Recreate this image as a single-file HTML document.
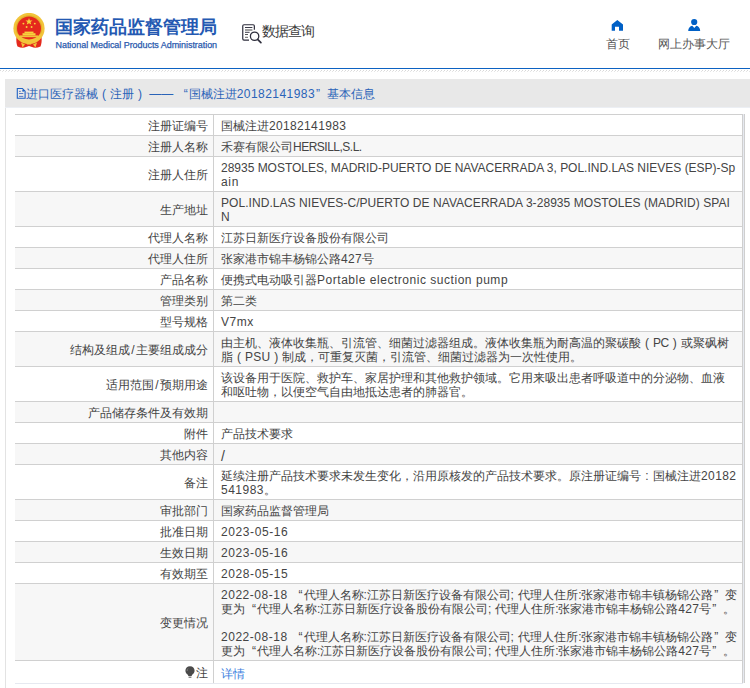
<!DOCTYPE html>
<html><head><meta charset="utf-8">
<style>
*{box-sizing:border-box}
html,body{margin:0;padding:0;width:750px;height:688px;overflow:hidden;background:#fff;font-family:"Liberation Sans",sans-serif;color:#444}
b,i{font-weight:normal;font-style:normal}
.abs{position:absolute}
.emblem{position:absolute;left:12px;top:13px}
.title{position:absolute;left:55px;top:15px;font-size:18px;line-height:24px;color:#2459b2;font-weight:bold;white-space:nowrap}
.sub{position:absolute;left:55.5px;top:39px;font-size:9px;line-height:12px;color:#2a5aae;white-space:nowrap;letter-spacing:-0.05px;-webkit-text-stroke:0.25px #2a5aae}
.query{position:absolute;left:262px;top:21px;font-size:14px;line-height:20px;color:#3a3a3a;white-space:nowrap;letter-spacing:-1px}
.nav{position:absolute;font-size:12px;line-height:16px;color:#555;white-space:nowrap}
.blue{position:absolute;left:0;top:68px;width:750px;height:1px;background:#0c62c2}
.hatch{position:absolute;left:0;top:70px;width:750px;height:2px;background-image:linear-gradient(45deg,transparent 0 40%,#dcdcdc 40% 60%,transparent 60%);background-size:3px 2px}
.box{position:absolute;left:5px;top:79px;width:760px;height:620px;border-left:1px solid #e3e3e3}
.bar{position:absolute;left:5px;top:79px;width:745px;height:28px;background:#e8e8e8}
.bartxt{position:absolute;left:26px;top:86px;font-size:12px;line-height:16px;color:#2a63b8;white-space:nowrap}
.row{position:absolute;left:15px;width:729px;border-top:1px solid #d0d0d0}
.row .lab{position:absolute;left:0;top:0;width:199px;border-right:1px solid #d0d0d0;text-align:right;padding-right:5px;font-size:12px;white-space:nowrap}
.row .val{position:absolute;left:206px;top:4px;font-size:12px;line-height:14px;white-space:nowrap}
.ln{height:14px}
.lq,.rq,.pp{display:inline-block;width:12px}
.lq{text-align:right;padding-right:1px}
.rq{text-align:left;padding-left:1px}
.pp{text-align:center}
.cl{display:inline-block;width:3px;letter-spacing:0;text-align:center}
.rb{position:absolute;left:742px;top:114px;width:3px;height:569px;border-left:1px solid #cfcfcf;border-right:1px solid #cfcfcf;background:#e6e9f0}
.bb{position:absolute;left:15px;top:683px;width:728px;height:1px;background:#e6e9f0}
a{color:#3c7fe0}
.bulb{vertical-align:-1px;margin-right:1px}
</style></head><body>
<svg class="emblem" width="34" height="36" viewBox="0 0 34 36">
<path d="M4.5 24 C4 28 4.5 31 5.5 33.5 C9 35 12 35 14 34 L17 33 L20 34 C22 35 25 35 28.5 33.5 C29.5 31 30 28 29.5 24 Z" fill="#e4291c"/>
<circle cx="17" cy="15.5" r="15.6" fill="#f2c43a"/>
<circle cx="17" cy="15.5" r="13.2" fill="#e3b02a"/>
<circle cx="17" cy="15.5" r="12" fill="#e5281d"/>
<polygon points="17,5 17.9,7.4 20.5,7.5 18.5,9.1 19.2,11.6 17,10.2 14.8,11.6 15.5,9.1 13.5,7.5 16.1,7.4" fill="#f7d43c"/>
<circle cx="11.4" cy="10.6" r="0.95" fill="#f7d43c"/><circle cx="22.8" cy="10.6" r="0.95" fill="#f7d43c"/>
<circle cx="14.6" cy="14" r="0.95" fill="#f7d43c"/><circle cx="19.6" cy="14" r="0.95" fill="#f7d43c"/>
<rect x="12.5" y="18.6" width="9" height="1.6" fill="#f7d43c"/>
<rect x="10.5" y="20.2" width="13" height="2.2" fill="#f7d43c"/>
<rect x="7.8" y="22.4" width="18.4" height="1.8" fill="#f2c43a"/>
<path d="M4.5 20 Q17 33 29.5 20 L29.5 23.5 Q17 35 4.5 23.5 Z" fill="#f2c43a"/>
<path d="M9 29.5 L10.5 34.5 L13 31.5 Z M25 29.5 L23.5 34.5 L21 31.5 Z" fill="#f2c43a"/>
<path d="M14 29 Q17 27.5 20 29 L19 31.5 H15 Z" fill="#f2c43a"/>
</svg>
<div class="title">国家药品监督管理局</div>
<div class="sub">National Medical Products Administration</div>
<svg class="abs" style="left:240px;top:22px" width="24" height="24" viewBox="0 0 24 24">
<path d="M14.35 7.8 V4 Q14.35 2.75 13.1 2.75 H4 Q2.75 2.75 2.75 4 V16.8 Q2.75 18.05 4 18.05 H9" fill="none" stroke="#2e2e3c" stroke-width="1.2"/>
<path d="M5 5.5 H12.4" stroke="#3a3a48" stroke-width="1"/>
<path d="M5 8 H12.4" stroke="#777" stroke-width="1.4"/>
<path d="M5 10.3 H9.6" stroke="#3a3a48" stroke-width="1"/>
<path d="M5 12.5 H8" stroke="#555" stroke-width="1"/>
<path d="M5 15.3 H8" stroke="#666" stroke-width="1"/>
<circle cx="14.6" cy="14.25" r="4.2" fill="none" stroke="#2e2e3c" stroke-width="1.3"/>
<path d="M17.6 17.4 L20.9 20.7" stroke="#2e2e3c" stroke-width="1.7" stroke-linecap="round"/>
</svg>
<div class="query">数据查询</div>
<svg class="abs" style="left:610px;top:18px" width="15" height="15" viewBox="0 0 15 15"><path d="M7.3 2 L13 6.5 V12.8 H9 V8.8 H5 V12.8 H1.7 V6.5 Z" fill="#0060c6"/></svg>
<div class="nav" style="left:606px;top:36px">首页</div>
<svg class="abs" style="left:687px;top:18px" width="14" height="14" viewBox="0 0 14 14"><circle cx="7.2" cy="4" r="3.1" fill="#0060c6"/><path d="M1.2 13 C1.2 10 3 8.2 5.3 7.8 L7.3 10 L9.3 7.8 C11.5 8.2 13.2 10 13.2 13 Z" fill="#0060c6"/></svg>
<div class="nav" style="left:658px;top:36px">网上办事大厅</div>
<div class="blue"></div>
<svg class="abs" style="left:0;top:70px" width="750" height="2"><defs><pattern id="hp" width="3" height="2" patternUnits="userSpaceOnUse"><rect x="0" y="0" width="1" height="1" fill="#d8d8d8"/><rect x="2" y="1" width="1" height="1" fill="#e6e6e6"/></pattern></defs><rect width="750" height="2" fill="url(#hp)"/></svg>
<div class="box"></div>
<div class="bar"></div><div class="abs" style="left:5px;top:107px;width:745px;height:1px;background:#eceff4"></div>
<svg class="abs" style="left:16px;top:87px" width="11" height="13" viewBox="0 0 11 13"><path d="M1.3 1.5 H6.4 L9.1 4.2 V11.2 H1.3 Z" fill="none" stroke="#1f62c4" stroke-width="1.1"/><rect x="6.3" y="3" width="1.9" height="1.6" fill="#1f62c4"/><path d="M3 4.4 H4.8 M3 6.5 H7.3 M3 9.4 H7.3" stroke="#4a6fc0" stroke-width="0.9"/></svg>
<div class="bartxt">进口医疗器械<i class="pp">(</i>注册<i class="pp">)</i> —— <i class="lq">“</i>国械注进<b class="L" style="letter-spacing:0.45px">20182141983</b><i class="rq">”</i>基本信息</div>
<div class="row" style="top:114px;height:21px;background:#fff"><div class="lab" style="height:20px;line-height:22px">注册证编号</div><div class="val"><div class="ln">国械注进<b class="L" style="letter-spacing:0.345px">20182141983</b></div></div></div><div class="row" style="top:135px;height:21px;background:#f7f7f7"><div class="lab" style="height:20px;line-height:22px">注册人名称</div><div class="val"><div class="ln">禾赛有限公司<b class="L" style="letter-spacing:-0.500px">HERSILL,S.L.</b></div></div></div><div class="row" style="top:156px;height:35px;background:#fff"><div class="lab" style="height:34px;line-height:36px">注册人住所</div><div class="val"><div class="ln"><b class="L" style="letter-spacing:-0.011px">28935 MOSTOLES, MADRID-PUERTO DE NAVACERRADA 3, POL.IND.LAS NIEVES (ESP)-Sp</b></div><div class="ln"><b class="L" style="letter-spacing:0.667px">ain</b></div></div></div><div class="row" style="top:191px;height:35px;background:#f7f7f7"><div class="lab" style="height:34px;line-height:36px">生产地址</div><div class="val"><div class="ln"><b class="L" style="letter-spacing:0.055px">POL.IND.LAS NIEVES-C/PUERTO DE NAVACERRADA 3-28935 MOSTOLES (MADRID) SPAI</b></div><div class="ln"><b class="L" style="letter-spacing:15.600px">N</b></div></div></div><div class="row" style="top:226px;height:21px;background:#fff"><div class="lab" style="height:20px;line-height:22px">代理人名称</div><div class="val"><div class="ln">江苏日新医疗设备股份有限公司</div></div></div><div class="row" style="top:247px;height:21px;background:#f7f7f7"><div class="lab" style="height:20px;line-height:22px">代理人住所</div><div class="val"><div class="ln">张家港市锦丰杨锦公路<b class="L" style="letter-spacing:0.333px">427</b>号</div></div></div><div class="row" style="top:268px;height:21px;background:#fff"><div class="lab" style="height:20px;line-height:22px">产品名称</div><div class="val"><div class="ln">便携式电动吸引器<b class="L" style="letter-spacing:0.531px">Portable electronic suction pump</b></div></div></div><div class="row" style="top:289px;height:21px;background:#f7f7f7"><div class="lab" style="height:20px;line-height:22px">管理类别</div><div class="val"><div class="ln">第二类</div></div></div><div class="row" style="top:310px;height:21px;background:#fff"><div class="lab" style="height:20px;line-height:22px">型号规格</div><div class="val"><div class="ln"><b class="L" style="letter-spacing:0.500px">V7mx</b></div></div></div><div class="row" style="top:331px;height:35px;background:#f7f7f7"><div class="lab" style="height:34px;line-height:36px">结构及组成<span style="margin:0 1.5px">/</span>主要组成成分</div><div class="val"><div class="ln">由主机、液体收集瓶、引流管、细菌过滤器组成。液体收集瓶为耐高温的聚碳酸<i class="pp">(</i><b class="L" style="letter-spacing:-0.500px">PC</b><i class="pp">)</i>或聚砜树</div><div class="ln">脂<i class="pp">(</i><b class="L" style="letter-spacing:0.200px">PSU</b><i class="pp">)</i>制成，可重复灭菌，引流管、细菌过滤器为一次性使用。</div></div></div><div class="row" style="top:366px;height:35px;background:#fff"><div class="lab" style="height:34px;line-height:36px">适用范围<span style="margin:0 1.5px">/</span>预期用途</div><div class="val"><div class="ln">该设备用于医院、救护车、家居护理和其他救护领域。它用来吸出患者呼吸道中的分泌物、血液</div><div class="ln">和呕吐物，以便空气自由地抵达患者的肺器官。</div></div></div><div class="row" style="top:401px;height:21px;background:#f7f7f7"><div class="lab" style="height:20px;line-height:22px">产品储存条件及有效期</div><div class="val"><div class="ln">&nbsp;</div></div></div><div class="row" style="top:422px;height:21px;background:#fff"><div class="lab" style="height:20px;line-height:22px">附件</div><div class="val"><div class="ln">产品技术要求</div></div></div><div class="row" style="top:443px;height:21px;background:#f7f7f7"><div class="lab" style="height:20px;line-height:22px">其他内容</div><div class="val"><div class="ln"><span style="font-size:14px;line-height:14px;display:inline-block;transform:translateY(1px)">/</span></div></div></div><div class="row" style="top:464px;height:35px;background:#fff"><div class="lab" style="height:34px;line-height:36px">备注</div><div class="val"><div class="ln">延续注册产品技术要求未发生变化，沿用原核发的产品技术要求。原注册证编号<i class="pp">:</i>国械注进<b class="L" style="letter-spacing:0.400px">20182</b></div><div class="ln"><b class="L" style="letter-spacing:0.500px">541983</b>。</div></div></div><div class="row" style="top:499px;height:21px;background:#f7f7f7"><div class="lab" style="height:20px;line-height:22px">审批部门</div><div class="val"><div class="ln">国家药品监督管理局</div></div></div><div class="row" style="top:520px;height:21px;background:#fff"><div class="lab" style="height:20px;line-height:22px">批准日期</div><div class="val"><div class="ln"><b class="L" style="letter-spacing:0.600px">2023-05-16</b></div></div></div><div class="row" style="top:541px;height:21px;background:#f7f7f7"><div class="lab" style="height:20px;line-height:22px">生效日期</div><div class="val"><div class="ln"><b class="L" style="letter-spacing:0.600px">2023-05-16</b></div></div></div><div class="row" style="top:562px;height:21px;background:#fff"><div class="lab" style="height:20px;line-height:22px">有效期至</div><div class="val"><div class="ln"><b class="L" style="letter-spacing:0.600px">2028-05-15</b></div></div></div><div class="row" style="top:583px;height:77px;background:#f7f7f7"><div class="lab" style="height:76px;line-height:78px">变更情况</div><div class="val"><div class="ln"><b class="L" style="letter-spacing:0.533px">2022-08-18 </b><i class="lq">“</i>代理人名称<b class="L" style="letter-spacing:0.533px"><i class="cl">:</i></b>江苏日新医疗设备有限公司<b class="L" style="letter-spacing:0.533px">; </b>代理人住所<b class="L" style="letter-spacing:0.533px"><i class="cl">:</i></b>张家港市锦丰镇杨锦公路<i class="rq">”</i>变</div><div class="ln">更为<i class="lq">“</i>代理人名称<b class="L" style="letter-spacing:0.286px"><i class="cl">:</i></b>江苏日新医疗设备股份有限公司<b class="L" style="letter-spacing:0.286px">; </b>代理人住所<b class="L" style="letter-spacing:0.286px"><i class="cl">:</i></b>张家港市锦丰杨锦公路<b class="L" style="letter-spacing:0.286px">427</b>号<i class="rq">”</i>。</div><div class="ln">&nbsp;</div><div class="ln"><b class="L" style="letter-spacing:0.533px">2022-08-18 </b><i class="lq">“</i>代理人名称<b class="L" style="letter-spacing:0.533px"><i class="cl">:</i></b>江苏日新医疗设备有限公司<b class="L" style="letter-spacing:0.533px">; </b>代理人住所<b class="L" style="letter-spacing:0.533px"><i class="cl">:</i></b>张家港市锦丰镇杨锦公路<i class="rq">”</i>变</div><div class="ln">更为<i class="lq">“</i>代理人名称<b class="L" style="letter-spacing:0.286px"><i class="cl">:</i></b>江苏日新医疗设备股份有限公司<b class="L" style="letter-spacing:0.286px">; </b>代理人住所<b class="L" style="letter-spacing:0.286px"><i class="cl">:</i></b>张家港市锦丰杨锦公路<b class="L" style="letter-spacing:0.286px">427</b>号<i class="rq">”</i>。</div></div></div><div class="row" style="top:660px;height:23px;background:#fff"><div class="lab" style="height:22px;line-height:24px"><svg class="bulb" width="10" height="12" viewBox="0 0 10 12"><path d="M5 0.3 C7.8 0.3 9.6 2.3 9.6 4.8 C9.6 6.8 8.3 7.8 7.2 8.8 L6.6 10 H3.4 L2.8 8.8 C1.7 7.8 0.4 6.8 0.4 4.8 C0.4 2.3 2.2 0.3 5 0.3 Z" fill="#4a4a4a"/><rect x="3.6" y="10.6" width="2.8" height="1.2" fill="#6a6a6a"/><path d="M3 2.5 Q2 3.5 2.2 5" stroke="#888" stroke-width="0.8" fill="none"/></svg>注</div><div class="val" style="top:6px"><a>详情</a></div></div>
<div class="rb"></div>
<div class="bb"></div>
</body></html>
